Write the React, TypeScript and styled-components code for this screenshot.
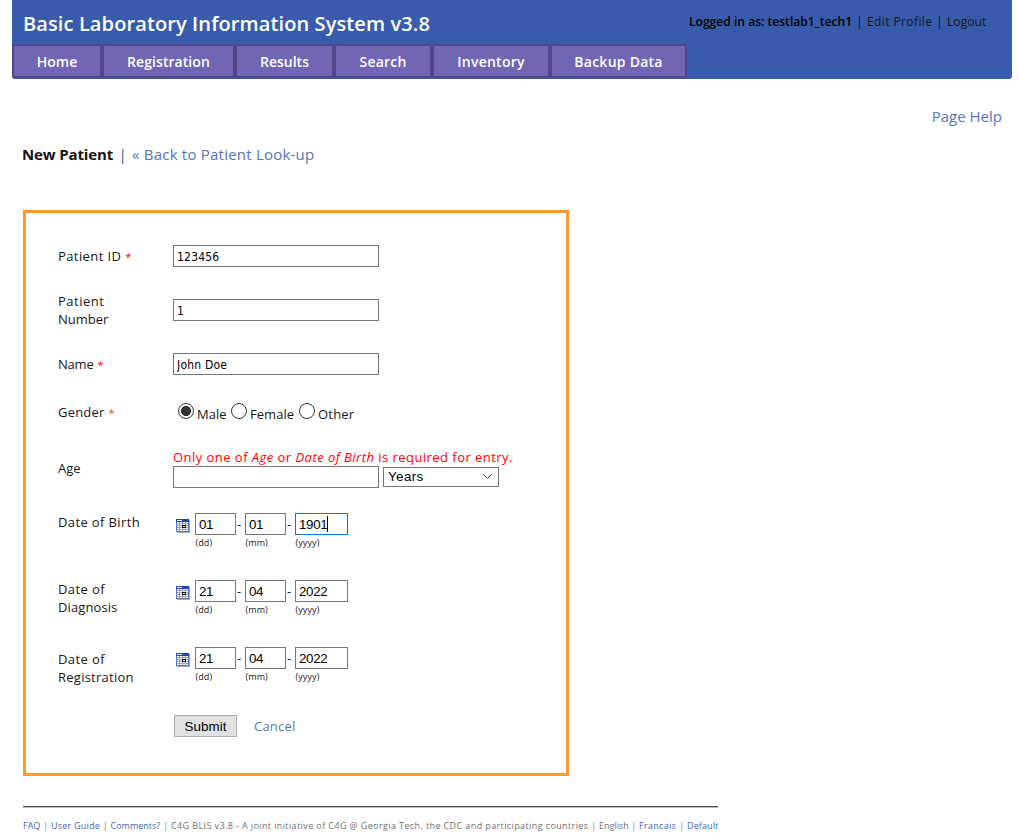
import React from "react";
import styled, { createGlobalStyle } from "styled-components";

const GlobalStyle = createGlobalStyle`
  * { box-sizing: border-box; }
  body {
    margin: 0;
    background: #fff;
    color: #1c1616;
    font-family: "Trebuchet MS", "Open Sans", sans-serif;
    font-size: 13px;
  }
`;

type Spaced = { $ls?: number };

const Page = styled.div`
  width: 1019px;
  height: 840px;
  padding: 0 7px 0 12px;
  overflow: hidden;
  display: flex;
  flex-direction: column;
`;

const Header = styled.header`
  height: 79px;
  flex: none;
  background: #385cab;
  border-radius: 0 0 3px 3px;
  display: flex;
  flex-direction: column;
`;

const HeaderTop = styled.div`
  height: 44px;
  padding: 0 26px 0 11px;
  display: flex;
  justify-content: space-between;
`;

const Title = styled.h1`
  margin: 0;
  font-size: 20px;
  line-height: 48px;
  font-weight: 600;
  letter-spacing: 0.11px;
  color: #fff;
  white-space: nowrap;
`;

const Account = styled.div`
  display: flex;
  font-size: 12px;
  line-height: 44px;
  font-weight: 500;
  color: #0b0b12;
  white-space: nowrap;
`;

const UserName = styled.span`
  font-weight: 600;
  width: 163px;
  color: #000;
  letter-spacing: 0.04px;
`;

const Divider = styled.span<{ $w: number }>`
  width: ${(p) => p.$w}px;
  flex: none;
  text-align: center;
`;

const AccountLink = styled.a<Spaced & { $w: number }>`
  color: #16161c;
  width: ${(p) => p.$w}px;
  letter-spacing: ${(p) => p.$ls ?? 0}px;
`;

const Tabs = styled.nav`
  display: flex;
  height: 34px;
`;

const Tab = styled.a<Spaced & { $w: number }>`
  width: ${(p) => p.$w}px;
  border: 2px solid #50478a;
  border-radius: 3px;
  background: #7066b3;
  color: #fff;
  font-size: 14px;
  font-weight: 600;
  line-height: 31px;
  text-align: center;
  white-space: nowrap;
  letter-spacing: ${(p) => p.$ls ?? 0}px;
`;

const HelpRow = styled.div`
  display: flex;
  justify-content: flex-end;
  padding: 26px 10px 0 0;
  font-size: 15px;
  line-height: 22px;
  letter-spacing: 0.05px;
`;

const Link = styled.a<Spaced>`
  color: #5676b9;
  letter-spacing: ${(p) => p.$ls ?? 0}px;
`;

const Heading = styled.div`
  display: flex;
  margin: 16px 0 0 10px;
  font-size: 15px;
  line-height: 22px;
  white-space: nowrap;
`;

const HeadingText = styled.b`
  width: 91px;
  color: #1a1010;
  letter-spacing: -0.13px;
`;

const HeadingBar = styled.span`
  width: 19px;
  text-align: center;
  color: #2c5a94;
`;

const FormPanel = styled.form`
  width: 546px;
  height: 566px;
  flex: none;
  margin: 45px 0 0 11px;
  padding: 16px 0 0 32px;
  border: 3px solid #ff9933;
`;

const Row = styled.div<{ $h: number; $top?: boolean }>`
  display: flex;
  height: ${(p) => p.$h}px;
  align-items: ${(p) => (p.$top ? "flex-start" : "center")};
`;

const Label = styled.div<{ $pt?: number }>`
  width: 115px;
  flex: none;
  line-height: 18px;
  padding-top: ${(p) => p.$pt ?? 0}px;
`;

const LabelText = styled.span<Spaced>`
  letter-spacing: ${(p) => p.$ls ?? 0}px;
`;

const Star = styled.span<{ $dark?: boolean }>`
  color: ${(p) => (p.$dark ? "#d8500c" : "#ff0000")};
  margin-left: 4px;
  font-size: 11px;
  line-height: 1;
`;

const TextInput = styled.input`
  width: 206px;
  height: 22px;
  padding: 1px 3px 0;
  border: 1px solid #767676;
  border-radius: 0;
  outline: none;
  background: #fff;
  color: #000;
  font: 12px Tahoma, "DejaVu Sans Condensed", sans-serif;
  letter-spacing: 0.2px;
`;

const RadioGroup = styled.div`
  display: flex;
  padding-left: 5px;
`;

const RadioOption = styled.label<Spaced & { $w: number }>`
  display: flex;
  width: ${(p) => p.$w}px;
  line-height: 18px;
  padding-top: 1px;
  white-space: nowrap;
  letter-spacing: ${(p) => p.$ls ?? 0}px;
`;

const RadioMark = styled.span<{ $on?: boolean }>`
  width: 16px;
  height: 16px;
  flex: none;
  margin: 0 3px 0 0;
  border: 1px solid #333;
  border-radius: 50%;
  background: ${(p) => (p.$on ? "radial-gradient(circle, #333 0 4.8px, #fff 5.3px)" : "#fff")};
`;

const RadioText = styled.span`
  padding-top: 2px;
`;

const AgeField = styled.div`
  display: flex;
  flex-direction: column;
`;

const Notice = styled.div`
  color: #f00;
  line-height: 18px;
  letter-spacing: 0.46px;
  white-space: nowrap;
`;

const AgeInputs = styled.div`
  display: flex;
  align-items: center;
  gap: 4px;
`;

const Select = styled.div`
  display: flex;
  align-items: center;
  justify-content: space-between;
  width: 116px;
  height: 20px;
  padding: 0 5px 0 4px;
  border: 1px solid #767676;
  color: #000;
  font: 13.33px "Liberation Sans", sans-serif;
  letter-spacing: 0.4px;
`;

const DateField = styled.div`
  display: flex;
  align-items: flex-start;
  padding: 11px 0 0 3px;
`;

const CalendarSlot = styled.span`
  width: 19px;
  padding-top: 6px;
  line-height: 0;
`;

const DatePart = styled.div<{ $w: number }>`
  position: relative;
  width: ${(p) => p.$w}px;
`;

const DateInput = styled(TextInput)<{ $active?: boolean }>`
  display: block;
  width: 100%;
  padding-top: 0;
  border-color: ${(p) => (p.$active ? "#0078d7" : "#767676")};
  font: 13.33px "Liberation Sans", sans-serif;
  letter-spacing: -0.3px;
`;

const Caret = styled.span`
  position: absolute;
  left: 32px;
  top: 3px;
  width: 1px;
  height: 16px;
  background: #000;
`;

const Hint = styled.div`
  margin-left: 0.5px;
  padding-top: 1px;
  font-size: 9px;
  line-height: 14px;
  letter-spacing: 0.1px;
`;

const Dash = styled.span`
  width: 9px;
  padding-left: 1px;
  line-height: 23px;
`;

const Actions = styled.div`
  display: flex;
  align-items: center;
  gap: 17px;
  padding-left: 1px;
`;

const SubmitButton = styled.button`
  width: 63px;
  height: 22px;
  padding: 0;
  border: 1px solid #adadad;
  background: #e1e1e1;
  color: #000;
  font: 13.33px "Liberation Sans", sans-serif;
  letter-spacing: 0.1px;
`;

const Footer = styled.footer`
  width: 695px;
  margin: 30px 0 0 11px;
  border-top: 1px solid #555;
  box-shadow: inset 0 1px 0 #b8b8b8;
  padding-top: 11px;
  display: flex;
  font-size: 9px;
  line-height: 16px;
  color: #777;
  white-space: nowrap;
`;

const FooterItem = styled.span<Spaced & { $w: number; $link?: boolean }>`
  width: ${(p) => p.$w}px;
  flex: none;
  color: ${(p) => (p.$link ? "#4468b4" : "#707070")};
  letter-spacing: ${(p) => p.$ls ?? 0}px;
`;

const tabs = [
  { text: "Home", w: 90, ls: 0 },
  { text: "Registration", w: 133, ls: 0.06 },
  { text: "Results", w: 99, ls: 0 },
  { text: "Search", w: 98, ls: 0.2 },
  { text: "Inventory", w: 118, ls: 0.25 },
  { text: "Backup Data", w: 137, ls: 0.25 },
];

const footerItems = [
  { text: "FAQ", w: 17.5, ls: 0, link: true },
  { text: "User Guide", w: 49, ls: 0.23, link: true },
  { text: "Comments?", w: 50, ls: 0, link: true },
  {
    text: "C4G BLIS v3.8 - A joint initiative of C4G @ Georgia Tech, the CDC and participating countries",
    w: 417.5,
    ls: 0.39,
  },
  { text: "English", w: 29.5, ls: 0 },
  { text: "Francais", w: 37.5, ls: 0.3, link: true },
  { text: "Default", w: 31, ls: 0.1, link: true },
];

function Calendar() {
  return (
    <svg width="14" height="14" viewBox="0 0 14 14" shapeRendering="crispEdges">
      <path fill="#a9a9ad" d="M1 1h13v13H1z" />
      <path fill="#5578bd" d="M0 0h13v13H0z" />
      <path fill="#2146a3" d="M0 0h13v3H0z" />
      <path fill="#fff" d="M1 1h5v1H1z" />
      <path fill="#a2a2a2" d="M1 3h11v9H1z" />
      <path
        fill="#fff"
        d="M1 3h2v1H1zM4 3h2v1H4zM7 3h2v1H7zM10 3h2v1h-2zM1 5h2v1H1zM4 5h2v1H4zM7 5h2v1H7zM10 5h2v1h-2zM1 7h2v1H1zM4 7h2v1H4zM10 7h2v1h-2zM1 9h2v1H1zM4 9h2v1H4zM7 9h2v1H7zM10 9h2v1h-2zM1 11h2v1H1zM4 11h2v1H4zM7 11h2v1H7zM10 11h2v1h-2z"
      />
      <path fill="#000" d="M6 6h4v3H6z" />
      <path fill="#fff" d="M7 7h2v1H7z" />
    </svg>
  );
}

function DateInputs({ values, active }: { values: string[]; active?: boolean }) {
  return (
    <DateField>
      <CalendarSlot>
        <Calendar />
      </CalendarSlot>
      <DatePart $w={41}>
        <DateInput defaultValue={values[0]} />
        <Hint>(dd)</Hint>
      </DatePart>
      <Dash>-</Dash>
      <DatePart $w={41}>
        <DateInput defaultValue={values[1]} />
        <Hint>(mm)</Hint>
      </DatePart>
      <Dash>-</Dash>
      <DatePart $w={53}>
        <DateInput defaultValue={values[2]} $active={active} />
        {active && <Caret />}
        <Hint>(yyyy)</Hint>
      </DatePart>
    </DateField>
  );
}

export default function App() {
  return (
    <Page>
      <GlobalStyle />
      <Header>
        <HeaderTop>
          <Title>Basic Laboratory Information System v3.8</Title>
          <Account>
            <UserName>Logged in as: testlab1_tech1</UserName>
            <Divider $w={15}>|</Divider>
            <AccountLink $w={65} $ls={0.4}>Edit Profile</AccountLink>
            <Divider $w={15}>|</Divider>
            <AccountLink $w={39} $ls={0.1}>Logout</AccountLink>
          </Account>
        </HeaderTop>
        <Tabs>
          {tabs.map((t) => (
            <Tab key={t.text} $w={t.w} $ls={t.ls}>{t.text}</Tab>
          ))}
        </Tabs>
      </Header>

      <HelpRow>
        <Link>Page Help</Link>
      </HelpRow>
      <Heading>
        <HeadingText>New Patient</HeadingText>
        <HeadingBar>|</HeadingBar>
        <Link $ls={0.22}>« Back to Patient Look-up</Link>
      </Heading>

      <FormPanel onSubmit={(e) => e.preventDefault()}>
        <Row $h={54}>
          <Label><LabelText $ls={0.4}>Patient ID</LabelText><Star>*</Star></Label>
          <TextInput defaultValue="123456" />
        </Row>
        <Row $h={54}>
          <Label>
            <LabelText $ls={0.5}>Patient</LabelText><br />
            <LabelText>Number</LabelText>
          </Label>
          <TextInput defaultValue="1" />
        </Row>
        <Row $h={54}>
          <Label><LabelText $ls={-0.2}>Name</LabelText><Star>*</Star></Label>
          <TextInput defaultValue="John Doe" />
        </Row>
        <Row $h={42}>
          <Label><LabelText $ls={0.2}>Gender</LabelText><Star $dark>*</Star></Label>
          <RadioGroup>
            <RadioOption $w={53}><RadioMark $on /><RadioText>Male</RadioText></RadioOption>
            <RadioOption $w={68} $ls={0.05}><RadioMark /><RadioText>Female</RadioText></RadioOption>
            <RadioOption $w={58} $ls={0.2}><RadioMark /><RadioText>Other</RadioText></RadioOption>
          </RadioGroup>
        </Row>
        <Row $h={69}>
          <Label>Age</Label>
          <AgeField>
            <Notice>Only one of <i>Age</i> or <i>Date of Birth</i> is required for entry.</Notice>
            <AgeInputs>
              <TextInput />
              <Select>
                Years
                <svg width="11" height="7" viewBox="0 0 11 7" fill="none" stroke="#444" strokeWidth="1">
                  <path d="M1 1l4.5 4.5L10 1" />
                </svg>
              </Select>
            </AgeInputs>
          </AgeField>
        </Row>
        <Row $h={67} $top>
          <Label $pt={11}><LabelText $ls={0.38}>Date of Birth</LabelText></Label>
          <DateInputs values={["01", "01", "1901"]} active />
        </Row>
        <Row $h={67} $top>
          <Label $pt={11}>
            <LabelText $ls={0.4}>Date of</LabelText><br />
            <LabelText $ls={0.1}>Diagnosis</LabelText>
          </Label>
          <DateInputs values={["21", "04", "2022"]} />
        </Row>
        <Row $h={67} $top>
          <Label $pt={14}>
            <LabelText $ls={0.4}>Date of</LabelText><br />
            <LabelText $ls={0.25}>Registration</LabelText>
          </Label>
          <DateInputs values={["21", "04", "2022"]} />
        </Row>
        <Row $h={46}>
          <Label />
          <Actions>
            <SubmitButton>Submit</SubmitButton>
            <Link $ls={0.2}>Cancel</Link>
          </Actions>
        </Row>
      </FormPanel>

      <Footer>
        {footerItems.map((f, i) => (
          <React.Fragment key={f.text}>
            {i > 0 && <Divider $w={10.5}>|</Divider>}
            <FooterItem $w={f.w} $ls={f.ls} $link={f.link}>{f.text}</FooterItem>
          </React.Fragment>
        ))}
      </Footer>
    </Page>
  );
}
